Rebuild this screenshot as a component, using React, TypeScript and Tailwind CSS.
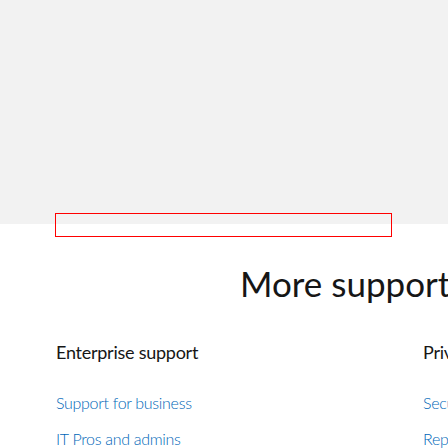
export default function App() {
  const columns = [
    {
      title: "Enterprise support",
      links: ["Support for business", "IT Pros and admins"],
    },
    {
      title: "Privacy",
      links: ["Security", "Report a scam"],
    },
  ];

  return (
    <div className="w-[448px] h-[448px] overflow-hidden bg-white font-['Lato','Open_Sans',sans-serif]">
      {/* grey hero strip */}
      <div className="h-[224px] bg-[#f2f2f2]" />
      {/* focus outline box */}
      <div className="-mt-[11px] ml-[55px] w-[337px] h-[24px] border border-[#ff0000]" />

      <h2 className="mt-[25px] pl-[240px] whitespace-nowrap text-[35px] leading-[42px] font-normal text-[#161616]">
        More support
      </h2>

      <div className="mt-[36px] pl-[56px] flex whitespace-nowrap">
        {columns.map((col) => (
          <div key={col.title} className="w-[367px] shrink-0">
            <h3 className="text-[18px] leading-[24px] tracking-[-0.25px] font-normal text-[#161616]">
              {col.title}
            </h3>
            <ul className="mt-[27px] flex flex-col gap-[12px]">
              {col.links.map((l) => (
                <li key={l} className="text-[16px] leading-[24px] tracking-[-0.3px] font-light text-[#0067b8]">
                  {l}
                </li>
              ))}
            </ul>
          </div>
        ))}
      </div>
    </div>
  );
}
